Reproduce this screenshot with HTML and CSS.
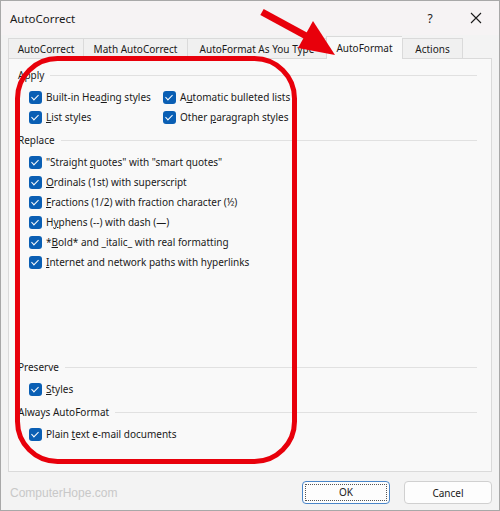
FILE: index.html
```html
<!DOCTYPE html>
<html lang="en">
<head>
    <meta charset="UTF-8">
    <title>AutoCorrect</title>
    <link rel="stylesheet" href="styles.css">
</head>
<body>
    <div class="window">
        <div class="titlebar">
            <span class="title">AutoCorrect</span>
            <span class="help">?</span>
            <span class="close">
                <svg width="12" height="12" viewBox="0 0 12 12"><path d="M1 1L11 11M11 1L1 11" stroke="#1a1a1a" stroke-width="1.1"/></svg>
            </span>
        </div>

        <div class="tabs">
            <div class="tab t1">AutoCorrect</div>
            <div class="tab t2">Math AutoCorrect</div>
            <div class="tab t3">AutoFormat As You Type</div>
            <div class="tab t4 active">AutoFormat</div>
            <div class="tab t5">Actions</div>
        </div>

        <div class="panel">
            <div class="group">Apply</div>
            <div class="grid">
                <label class="opt"><span class="box"></span><span>Built-in Hea<u>d</u>ing styles</span></label>
                <label class="opt"><span class="box"></span><span>A<u>u</u>tomatic bulleted lists</span></label>
                <label class="opt"><span class="box"></span><span><u>L</u>ist styles</span></label>
                <label class="opt"><span class="box"></span><span>Other <u>p</u>aragraph styles</span></label>
            </div>

            <div class="group">Replace</div>
            <div class="list">
                <label class="opt"><span class="box"></span><span>"Straight <u>q</u>uotes" with "smart quotes"</span></label>
                <label class="opt"><span class="box"></span><span><u>O</u>rdinals (1st) with superscript</span></label>
                <label class="opt"><span class="box"></span><span><u>F</u>ractions (1/2) with fraction character (½)</span></label>
                <label class="opt"><span class="box"></span><span>H<u>y</u>phens (--) with dash (—)</span></label>
                <label class="opt"><span class="box"></span><span>*<u>B</u>old* and _italic_ with real formatting</span></label>
                <label class="opt"><span class="box"></span><span><u>I</u>nternet and network paths with hyperlinks</span></label>
            </div>

            <div class="spacer"></div>

            <div class="group">Preserve</div>
            <div class="list">
                <label class="opt"><span class="box"></span><span><u>S</u>tyles</span></label>
            </div>

            <div class="group">Always AutoFormat</div>
            <div class="list">
                <label class="opt"><span class="box"></span><span>Plain <u>t</u>ext e-mail documents</span></label>
            </div>
        </div>

        <div class="footer">
            <span class="watermark">ComputerHope.com</span>
            <button class="btn default"><span>OK</span></button>
            <button class="btn">Cancel</button>
        </div>

        <!-- red annotation drawn over the dialog -->
        <svg class="markup" width="500" height="511" viewBox="0 0 500 511">
            <rect x="17.5" y="58.5" width="277" height="403" rx="40" fill="none" stroke="#e8000b" stroke-width="5"/>
            <path d="M262 12 L308 37" stroke="#e8000b" stroke-width="7" fill="none"/>
            <path d="M313 21 L298 48 L335 55 Z" fill="#e8000b"/>
        </svg>
    </div>
</body>
</html>
```

FILE: styles.css
```css
body {
    margin: 0;
    font-family: 'Noto Sans', 'Open Sans', sans-serif;
    font-size: 10px;
    color: #1a1a1a;
    background: #ffffff;
}

.window {
    position: relative;
    width: 500px;
    height: 511px;
    box-sizing: border-box;
    border: 1px solid #a8a8a8;
    background: #f3f3f3;
    display: flex;
    flex-direction: column;
}

.titlebar {
    height: 34px;
    display: flex;
    align-items: center;
    padding-left: 9px;
    background: #f6f3f4;
}

.title {
    font-size: 11.5px;
    flex: 1;
}

.help {
    width: 46px;
    text-align: center;
    font-size: 12px;
}

.close {
    width: 46px;
    display: flex;
    justify-content: center;
}

.tabs {
    display: flex;
    align-items: flex-end;
    padding: 2px 0 0 7px;
    height: 21px;
}

.tab {
    height: 20px;
    line-height: 20px;
    text-align: center;
    border: 1px solid #dadada;
    border-bottom: none;
    border-right: none;
    background: #f0f0f0;
    white-space: nowrap;
    box-sizing: border-box;
}

.t1 { width: 75px; }
.t2 { width: 104px; }
.t3 { width: 139px; }
.t4 { width: 76px; }
.t5 { width: 61px; border-right: 1px solid #dadada; }

.tab.active {
    height: 23px;
    line-height: 22px;
    background: #f9f9f9;
    position: relative;
    top: 1px;
}

.panel {
    margin: 0 7px;
    height: 414px;
    background: #f9f9f9;
    border: 1px solid #dadada;
    padding: 7px 8px 0 9px;
    box-sizing: border-box;
    display: flex;
    flex-direction: column;
}

.group {
    display: flex;
    align-items: center;
    gap: 6px;
    height: 18px;
    margin-right: 6px;
}

.group::after {
    content: '';
    flex: 1;
    height: 1px;
    background: #e1e1e1;
}

.grid {
    display: grid;
    grid-template-columns: 134px auto;
    row-gap: 4px;
    padding: 5px 0 6px 11px;
}

.list {
    display: flex;
    flex-direction: column;
    gap: 4px;
    padding: 5px 0 6px 11px;
}

.opt {
    display: flex;
    align-items: center;
    height: 16px;
    white-space: nowrap;
}

.box {
    width: 13px;
    height: 13px;
    border-radius: 3px;
    background: #0a5fb4;
    margin-right: 4px;
    position: relative;
    flex: none;
}

.box::after {
    content: '';
    position: absolute;
    left: 4px;
    top: 2px;
    width: 3px;
    height: 6px;
    border: solid #ffffff;
    border-width: 0 1.2px 1.2px 0;
    transform: rotate(45deg);
}

.spacer {
    flex: 1;
}

.list:last-child {
    padding-bottom: 29px;
}

.footer {
    flex: 1;
    display: flex;
    align-items: center;
    padding: 3px 7px 0 9px;
}

.watermark {
    flex: 1;
    font-family: 'Liberation Sans', sans-serif;
    font-size: 12px;
    color: #c8c8c8;
}

.btn {
    width: 88px;
    height: 23px;
    margin-left: 14px;
    font-family: inherit;
    font-size: 10px;
    color: #1a1a1a;
    background: #fdfdfd;
    border: 1px solid #d0d0d0;
    border-radius: 4px;
    padding: 0;
}

.btn.default {
    border-color: #4a86c8;
    padding: 2px;
}

.btn.default span {
    display: block;
    height: 100%;
    line-height: 15px;
    border: 1px dotted #555555;
    box-sizing: border-box;
}

.markup {
    position: absolute;
    left: -1px;
    top: -1px;
    pointer-events: none;
}
```
